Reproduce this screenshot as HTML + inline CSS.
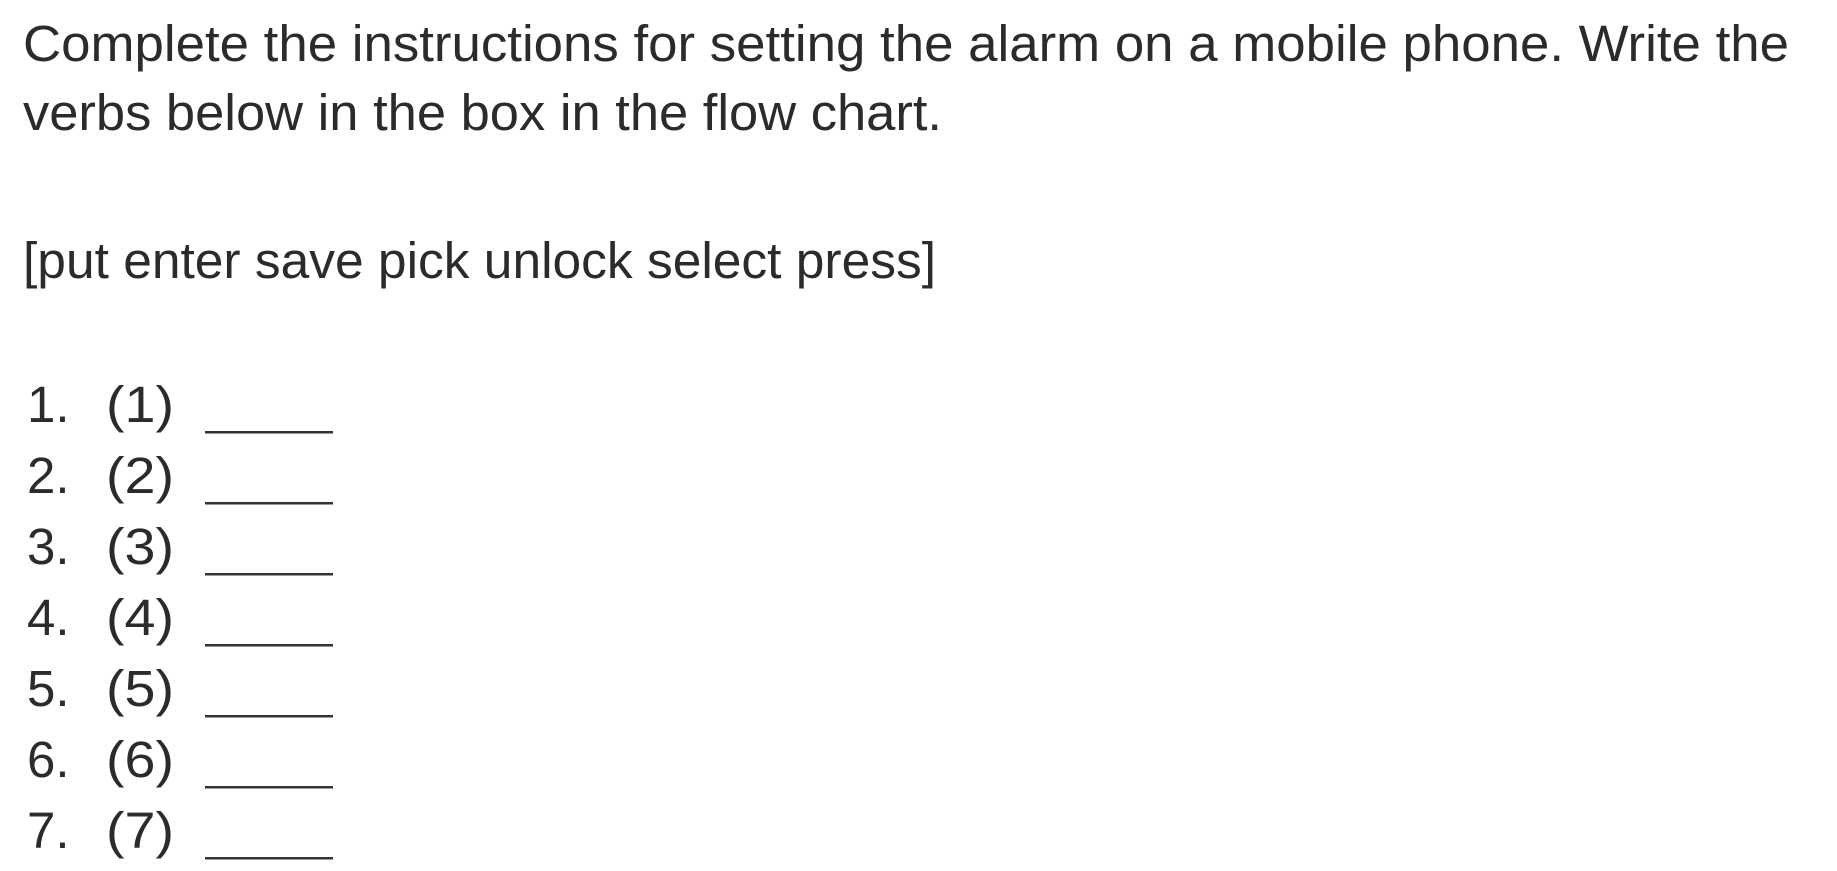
<!DOCTYPE html>
<html><head><meta charset="utf-8"><style>
html,body{margin:0;padding:0;background:#fff;}
svg{display:block}
text{font-family:"Liberation Sans",sans-serif;font-size:51px;fill:#2b2b2b;}
</style></head><body>
<svg width="1837" height="871" viewBox="0 0 1837 871">
<text x="23" y="61" textLength="1766" lengthAdjust="spacingAndGlyphs">Complete the instructions for setting the alarm on a mobile phone. Write the</text>
<text x="23" y="130" textLength="919" lengthAdjust="spacingAndGlyphs">verbs below in the box in the flow chart.</text>
<text x="23" y="278" textLength="913" lengthAdjust="spacingAndGlyphs">[put enter save pick unlock select press]</text>
<g>
<text x="27" y="422">1.</text><text x="106" y="422" textLength="68" lengthAdjust="spacingAndGlyphs">(1)</text><rect x="205" y="431" width="128" height="2.5" fill="#333"/>
<text x="27" y="493">2.</text><text x="106" y="493" textLength="68" lengthAdjust="spacingAndGlyphs">(2)</text><rect x="205" y="502" width="128" height="2.5" fill="#333"/>
<text x="27" y="564">3.</text><text x="106" y="564" textLength="68" lengthAdjust="spacingAndGlyphs">(3)</text><rect x="205" y="573" width="128" height="2.5" fill="#333"/>
<text x="27" y="635">4.</text><text x="106" y="635" textLength="68" lengthAdjust="spacingAndGlyphs">(4)</text><rect x="205" y="644" width="128" height="2.5" fill="#333"/>
<text x="27" y="706">5.</text><text x="106" y="706" textLength="68" lengthAdjust="spacingAndGlyphs">(5)</text><rect x="205" y="715" width="128" height="2.5" fill="#333"/>
<text x="27" y="777">6.</text><text x="106" y="777" textLength="68" lengthAdjust="spacingAndGlyphs">(6)</text><rect x="205" y="786" width="128" height="2.5" fill="#333"/>
<text x="27" y="848">7.</text><text x="106" y="848" textLength="68" lengthAdjust="spacingAndGlyphs">(7)</text><rect x="205" y="857" width="128" height="2.5" fill="#333"/>
</g>
</svg>
</body></html>
